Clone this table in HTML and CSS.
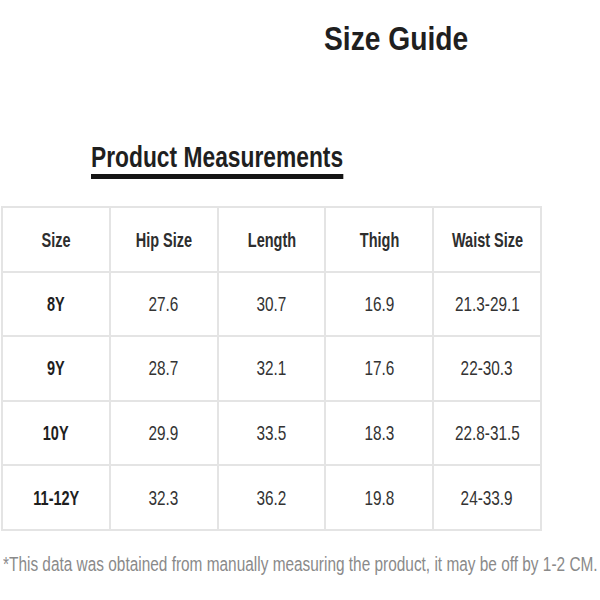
FILE: index.html
```html
<!DOCTYPE html>
<html lang="en">
<head>
<meta charset="utf-8">
<title>Size Guide</title>
<link rel="stylesheet" href="styles.css">
</head>
<body>
<div class="page">
  <div class="title"><span>Size Guide</span></div>
  <div class="subtitle"><span>Product Measurements</span></div>
  <div class="table">
    <div class="cell head"><span>Size</span></div>
    <div class="cell head"><span>Hip Size</span></div>
    <div class="cell head"><span>Length</span></div>
    <div class="cell head"><span>Thigh</span></div>
    <div class="cell head"><span>Waist Size</span></div>

    <div class="cell label"><span>8Y</span></div>
    <div class="cell"><span>27.6</span></div>
    <div class="cell"><span>30.7</span></div>
    <div class="cell"><span>16.9</span></div>
    <div class="cell"><span>21.3-29.1</span></div>

    <div class="cell label"><span>9Y</span></div>
    <div class="cell"><span>28.7</span></div>
    <div class="cell"><span>32.1</span></div>
    <div class="cell"><span>17.6</span></div>
    <div class="cell"><span>22-30.3</span></div>

    <div class="cell label"><span>10Y</span></div>
    <div class="cell"><span>29.9</span></div>
    <div class="cell"><span>33.5</span></div>
    <div class="cell"><span>18.3</span></div>
    <div class="cell"><span>22.8-31.5</span></div>

    <div class="cell label"><span>11-12Y</span></div>
    <div class="cell"><span>32.3</span></div>
    <div class="cell"><span>36.2</span></div>
    <div class="cell"><span>19.8</span></div>
    <div class="cell"><span>24-33.9</span></div>
  </div>
  <div class="note"><span>*This data was obtained from manually measuring the product, it may be off by 1-2 CM.</span></div>
</div>
</body>
</html>
```
FILE: styles.css
```css
html, body {
  margin: 0;
  padding: 0;
  background: #ffffff;
  overflow: hidden;
}

.page {
  font-family: "Liberation Sans", Arial, sans-serif;
  color: #222222;
  width: 600px;
}

.title {
  display: flex;
  padding: 18px 0 0 324px;
  font-size: 34px;
  line-height: 40px;
  font-weight: bold;
  color: #1f1f1f;
}

.title span {
  display: inline-block;
  white-space: nowrap;
  transform: scaleX(0.83);
  transform-origin: left center;
}

.subtitle {
  display: flex;
  margin-top: 81.4px;
  padding-left: 90.7px;
  font-size: 30px;
  line-height: 35px;
  font-weight: bold;
  color: #1f1f1f;
}

.subtitle span {
  display: inline-block;
  white-space: nowrap;
  border-bottom: 5px solid #141414;
  transform: scaleX(0.76);
  transform-origin: left center;
}

.table {
  display: grid;
  grid-template-columns: repeat(5, 1fr);
  grid-auto-rows: 62.6px;
  gap: 2px;
  padding: 2px;
  margin: 26.6px 0 0 1px;
  width: 541px;
  box-sizing: border-box;
  background: #e4e4e4;
}

.cell {
  display: flex;
  align-items: center;
  justify-content: center;
  background: #ffffff;
  font-size: 21px;
  color: #333333;
}

.cell span {
  display: inline-block;
  white-space: nowrap;
  transform: scaleX(0.73);
}

.cell.head {
  font-weight: bold;
  color: #2e2e2e;
  padding-top: 2px;
}

.cell.head span,
.cell.label span {
  transform: scaleX(0.69);
}

.cell.label {
  font-weight: bold;
  color: #1e1e1e;
}

.note {
  display: flex;
  margin-top: 20.8px;
  padding-left: 3px;
  font-size: 20px;
  line-height: 24px;
  color: #8a8a8a;
  white-space: nowrap;
}

.note span {
  display: inline-block;
  transform: scaleX(0.77);
  transform-origin: left center;
}
```
